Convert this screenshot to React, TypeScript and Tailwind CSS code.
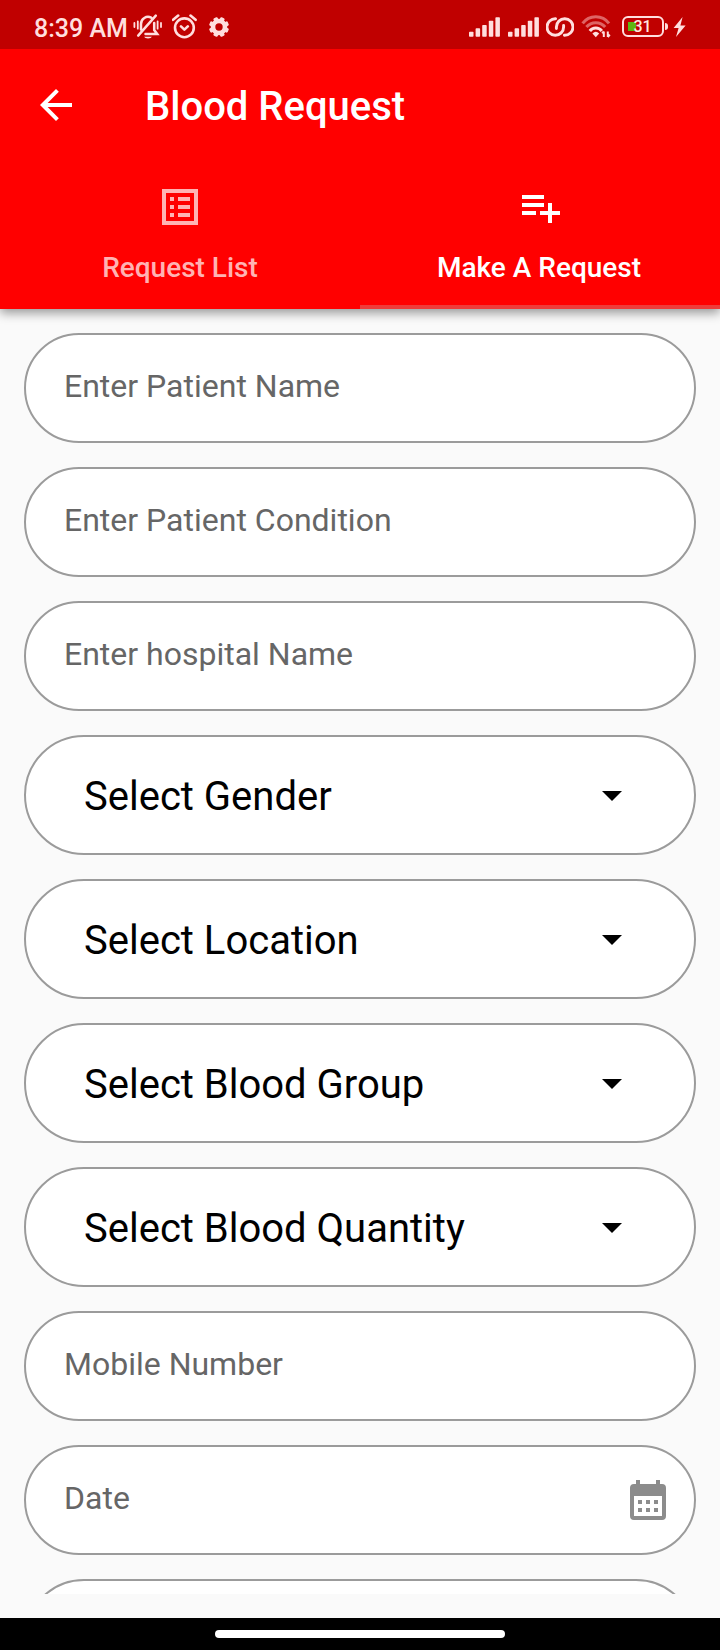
import type { ReactNode } from "react";

const TINT = "#ffdede";

function Glyph({ box, className, children }: { box: string; className: string; children: ReactNode }) {
  return (
    <svg viewBox={box} className={`shrink-0 ${className}`} fill="none" aria-hidden="true">
      {children}
    </svg>
  );
}

function BellOff() {
  return (
    <Glyph box="0 0 30 28" className="h-7 w-[30px]">
      <g stroke={TINT} strokeWidth="2.5" strokeLinecap="round">
        <path d="M1.4 10v4M4.8 8.3v7.4M24.6 8.3v7.4M28 10v4" strokeWidth="1.8" />
        <path d="M8 16.5V11a7 7 0 0 1 10.2-6.3M21.2 10v7l3 4H12.5M5.2 22.6L22.8 2.6" />
      </g>
      <path d="M11 23.8h8a4.2 2.6 0 0 1-8 0z" fill={TINT} />
    </Glyph>
  );
}

function Alarm() {
  return (
    <Glyph box="0 0 26 26" className="h-[26px] w-[26px]">
      <g stroke={TINT} strokeWidth="2.6" strokeLinecap="round" strokeLinejoin="round">
        <circle cx="12.4" cy="14.8" r="9.4" />
        <path d="M1.1 6.8L6.2 2.6M23.600 6.800L18.500 2.600M9 13.400l3.400 3.200 3.400-3.200" />
      </g>
    </Glyph>
  );
}

function Gear() {
  return (
    <Glyph box="-10 -10 20 20" className="h-5 w-5">
      <circle r="6" stroke={TINT} strokeWidth="4.6" />
      <g fill={TINT}>
        {[22.5, 67.5, 112.5, 157.5, 202.5, 247.5, 292.5, 337.5].map((a) => (
          <rect key={a} x="-2.3" y="-10" width="4.6" height="3.6" rx="1.2" transform={`rotate(${a})`} />
        ))}
      </g>
    </Glyph>
  );
}

function Signal() {
  const tops = [14.7, 11.3, 8, 3.8, 0.2];
  return (
    <Glyph box="0 0 31 20" className="h-5 w-[31px]">
      {tops.map((y, i) => (
        <rect key={i} x={i * 6.6} y={y} width="4.5" height={19.8 - y} rx="0.8" fill={TINT} />
      ))}
    </Glyph>
  );
}

function Link() {
  return (
    <Glyph box="0 0 28 20" className="h-5 w-7">
      <g stroke={TINT} strokeWidth="2.9" strokeLinecap="round">
        <path d="M9.6 1.7A8.3 8.3 0 1 0 17.6 10V8.4" />
        <path d="M18.4 18.3A8.3 8.3 0 1 0 10.4 10v1.6" />
      </g>
    </Glyph>
  );
}

function Wifi() {
  return (
    <Glyph box="0 0 31 24" className="h-6 w-[31px]">
      <g strokeWidth="3">
        <path d="M1.6 9.4a16.5 16.5 0 0 1 26.4 0" stroke="#de6464" />
        <path d="M5.4 13a12.4 12.4 0 0 1 18.8 0" stroke="#de6464" />
        <path d="M8.8 17a7.4 7.4 0 0 1 12 0" stroke={TINT} />
      </g>
      <path d="M11.4 19.4a5 5 0 0 1 6.8 0l-3.4 3.8z" fill={TINT} />
      <path d="M22.8 17.4v5.6M21.2 19.4l1.6-2M26.8 17.4V23M26.8 23l2-2.4" stroke={TINT} strokeWidth="2" />
    </Glyph>
  );
}

function Battery() {
  return (
    <div className="flex items-center">
      <div className="relative flex h-[21px] w-[42px] items-center justify-center rounded-[6px] border-2 border-[#ffdede]">
        <span className="absolute top-1 left-1 h-[9px] w-2 bg-[#5eb512]" />
        <span className="relative pr-px text-[16px] leading-none font-medium text-[#ffe8e0]">31</span>
      </div>
      <span className="ml-px h-[7px] w-[3px] rounded-r-sm bg-[#ffdede]" />
    </div>
  );
}

function StatusBar() {
  return (
    <div className="flex h-[49px] items-center bg-[#c00000] pt-[5px] pr-[34px] pl-[34px]">
      <span className="w-[99px] pt-[3px] text-[25px] leading-none font-medium whitespace-nowrap text-[#ffdede]">8:39 AM</span>
      <div className="flex items-center">
        <BellOff />
        <span className="-mt-0.5 ml-[9px]"><Alarm /></span>
        <span className="ml-[11px]"><Gear /></span>
      </div>
      <div className="ml-auto flex items-center">
        <Signal />
        <span className="ml-2"><Signal /></span>
        <span className="ml-[7px]"><Link /></span>
        <span className="-mt-0.5 ml-[7px]"><Wifi /></span>
        <span className="-mt-px ml-[10px]"><Battery /></span>
        <span className="ml-[5px]">
          <Glyph box="0 0 13 20" className="h-5 w-[13px]">
            <path d="M9.6 0L0.6 11h5L3 20l9.6-11.4H7.4z" fill={TINT} />
          </Glyph>
        </span>
      </div>
    </div>
  );
}

function Tab({ label, active, children }: { label: string; active?: boolean; children: ReactNode }) {
  return (
    <div
      className={`flex h-[144px] flex-1 flex-col items-center border-b-4 pt-[18px] ${
        active ? "border-[#ee3c3a] text-white" : "border-transparent text-[#ffb3b3]"
      }`}
    >
      <svg viewBox="0 0 24 24" className="h-12 w-12" fill="currentColor" aria-hidden="true">
        {children}
      </svg>
      <span className={`mt-[21px] text-[28px] leading-[32px] font-medium ${active ? "pr-[2px]" : ""}`}>{label}</span>
    </div>
  );
}

function Field({ label, icon }: { label: string; icon?: ReactNode }) {
  return (
    <div className="flex h-[110px] shrink-0 items-center justify-between rounded-full border-2 border-[#9b9b9b] bg-white pr-[22px] pl-[38px]">
      <span className="pb-[4px] text-[32px] leading-[38px] text-[#666666]">{label}</span>
      {icon}
    </div>
  );
}

function Select({ label }: { label: string }) {
  return (
    <div className="flex h-[120px] shrink-0 items-center justify-between rounded-full border-2 border-[#9b9b9b] bg-white px-[58px]">
      <span className="pt-[3px] text-[40px] leading-none text-black">{label}</span>
      <svg viewBox="0 0 24 24" className="h-12 w-12" aria-hidden="true">
        <path d="M7 10l5 5 5-5z" />
      </svg>
    </div>
  );
}

function CalendarIcon() {
  return (
    <svg viewBox="0 0 24 24" className="h-12 w-12" fill="#8c8c8c" aria-hidden="true">
      <path
        fillRule="evenodd"
        d="M6 2h2v2h8V2h2v2h1a2 2 0 0 1 2 2v14a2 2 0 0 1-2 2H5a2 2 0 0 1-2-2V6a2 2 0 0 1 2-2h1zM5 10v10h14V10z"
      />
      <path d="M7 12h2v2H7zM11 12h2v2h-2zM15 12h2v2h-2zM7 16h2v2H7zM11 16h2v2h-2zM15 16h2v2h-2z" />
    </svg>
  );
}

export default function App() {
  return (
    <div className="flex h-[1650px] w-[720px] flex-col overflow-hidden bg-[#fafafa] font-['Roboto',sans-serif]">
      <header className="relative z-10 shrink-0 bg-[#ff0000] shadow-[0_4px_10px_rgba(0,0,0,0.4)]">
        <StatusBar />
        <div className="flex h-[116px] items-center pb-[4px] pl-8">
          <svg viewBox="0 0 24 24" className="h-12 w-12" fill="#fff" aria-hidden="true">
            <path d="M20 11H7.83l5.59-5.59L12 4l-8 8 8 8 1.41-1.41L7.83 13H20v-2z" />
          </svg>
          <h1 className="ml-[65px] pt-[4px] text-[40px] leading-[48px] font-medium text-white">Blood Request</h1>
        </div>
        <nav className="flex">
          <Tab label="Request List">
            <path fillRule="evenodd" d="M3 3h18v18H3zM5 5v14h14V5z" />
            <path d="M7 7h2v2H7zM11 7h6v2h-6zM7 11h2v2H7zM11 11h6v2h-6zM7 15h2v2H7zM11 15h6v2h-6z" />
          </Tab>
          <Tab label="Make A Request" active>
            <path d="M14 10H3v2h11zM14 6H3v2h11zM18 14v-4h-2v4h-4v2h4v4h2v-4h4v-2zM3 16h7v-2H3z" />
          </Tab>
        </nav>
      </header>
      <main className="flex h-[1285px] shrink-0 flex-col gap-6 overflow-hidden px-6 pt-6">
        <Field label="Enter Patient Name" />
        <Field label="Enter Patient Condition" />
        <Field label="Enter hospital Name" />
        <Select label="Select Gender" />
        <Select label="Select Location" />
        <Select label="Select Blood Group" />
        <Select label="Select Blood Quantity" />
        <Field label="Mobile Number" />
        <Field label="Date" icon={<CalendarIcon />} />
        {/* taller field, clipped by the scroll area */}
        <div className="h-[120px] shrink-0 rounded-full border-2 border-[#9b9b9b] bg-white" />
      </main>
      <footer className="mt-6 flex h-8 shrink-0 justify-center bg-black pt-3">
        <div className="h-2 w-[290px] rounded-full bg-white" />
      </footer>
    </div>
  );
}
